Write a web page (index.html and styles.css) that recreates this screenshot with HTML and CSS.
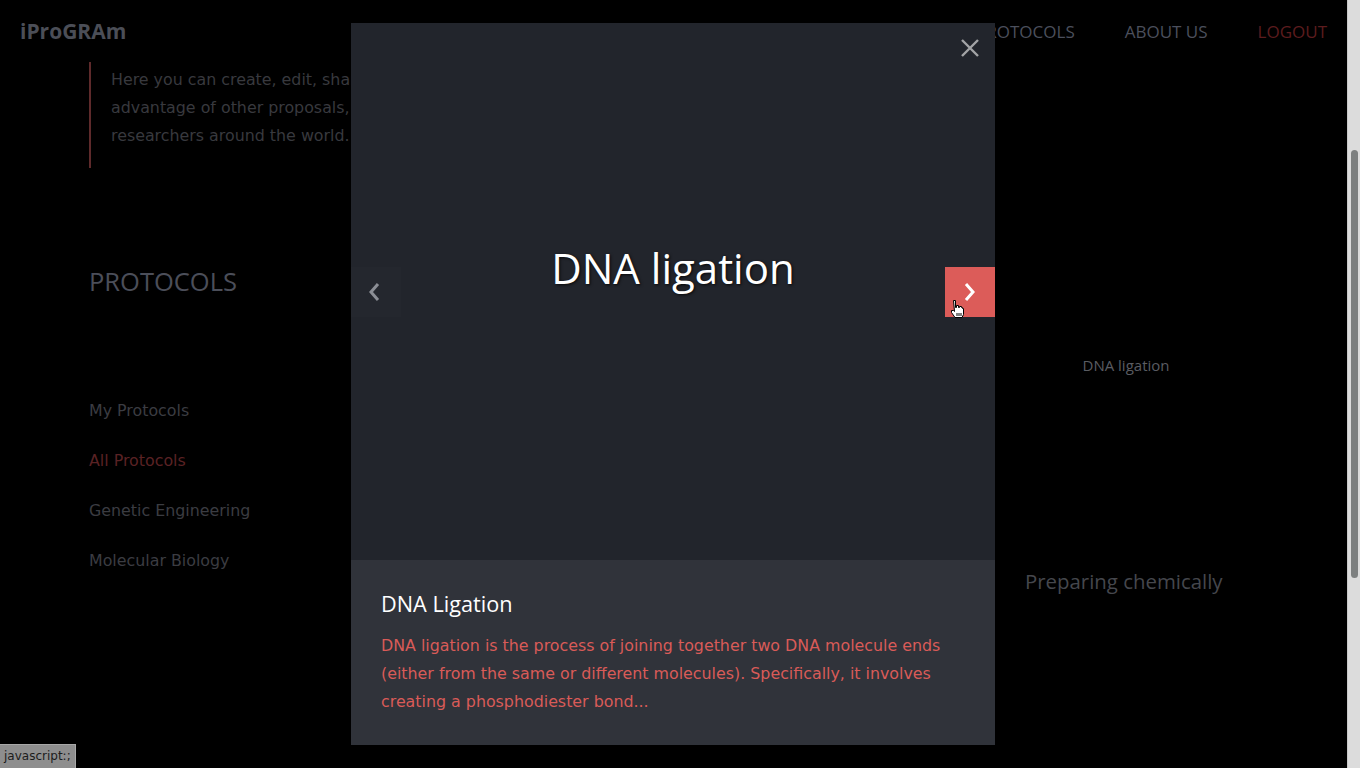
FILE: index.html
```html
<!DOCTYPE html>
<html lang="en">
<head>
<meta charset="utf-8">
<title>iProGRAm - Protocols</title>
<link rel="stylesheet" href="styles.css">
</head>
<body>
<div class="page">
  <div class="main">
    <header class="navbar">
      <div class="logo">iProGRAm</div>
      <nav class="nav">
        <a class="nav-link">HOME</a>
        <a class="nav-link">PROTOCOLS</a>
        <a class="nav-link">ABOUT US</a>
        <a class="nav-link logout">LOGOUT</a>
      </nav>
    </header>
    <div class="container">
      <blockquote class="intro">Here you can create, edit, share and take<br>advantage of other proposals, protocols by<br>researchers around the world.</blockquote>
      <section class="protocols">
        <aside class="sidebar">
          <h2 class="section-title">PROTOCOLS</h2>
          <ul class="menu">
            <li>My Protocols</li>
            <li class="active">All Protocols</li>
            <li>Genetic Engineering</li>
            <li>Molecular Biology</li>
          </ul>
        </aside>
        <div class="cards">
          <div class="card"></div>
          <div class="card"></div>
          <div class="card">
            <div class="card-thumb">DNA ligation</div>
            <div class="card-title">Preparing chemically</div>
          </div>
        </div>
      </section>
    </div>
  </div>
  <div class="scrollbar"><div class="thumb"></div></div>
</div>

<div class="modal">
  <div class="slide">
    <button class="close" aria-label="Close">
      <svg width="20" height="20" viewBox="0 0 20 20"><path d="M2 2 L18 18 M18 2 L2 18" stroke="#a3a4a6" stroke-width="2.4" fill="none"/></svg>
    </button>
    <h1 class="slide-title">DNA ligation</h1>
    <button class="arrow prev" aria-label="Previous">
      <svg width="14" height="20" viewBox="0 0 14 20"><path d="M10 2 L3 10 L10 18" stroke="#8b8e95" stroke-width="3" fill="none"/></svg>
    </button>
    <button class="arrow next" aria-label="Next">
      <svg width="14" height="20" viewBox="0 0 14 20"><path d="M4 2 L11 10 L4 18" stroke="#ffffff" stroke-width="3" fill="none"/></svg>
    </button>
  </div>
  <div class="caption">
    <h3 class="caption-title">DNA Ligation</h3>
    <p class="caption-text">DNA ligation is the process of joining together two DNA molecule ends (either from the same or different molecules). Specifically, it involves creating a phosphodiester bond...</p>
  </div>
</div>

<svg class="cursor" width="16" height="20" viewBox="0 0 16 20"><path d="M4.5 1.5 h2 v7 h1 v-2 h2 v2 h1 v-1 h2 v1 h1 v1 h1 v6 l-1.5 3 h-7 l-3.5 -5 v-2 h2 l1 1 z" fill="#ffffff" stroke="#000000" stroke-width="1"/><path d="M8 14 v3 M10 14 v3 M12 14 v3" stroke="#000" stroke-width="1"/></svg>

<div class="statusbar">javascript:;</div>
</body>
</html>
```

FILE: styles.css
```css
html, body {
  margin: 0;
  padding: 0;
  height: 100%;
  background: #000;
  overflow: hidden;
}

body {
  font-family: "DejaVu Sans", sans-serif;
}

.page {
  display: flex;
  height: 768px;
}

.main {
  flex: 1;
  min-width: 0;
}

.scrollbar {
  width: 13px;
  background: #dcdcdc;
  border-left: 1px solid #c8c8c8;
  box-sizing: border-box;
  padding-top: 150px;
  display: flex;
  justify-content: center;
}

.thumb {
  width: 7px;
  height: 428px;
  background: #7d8080;
  border-radius: 4px;
}

.navbar {
  height: 62px;
  display: flex;
  align-items: center;
  justify-content: space-between;
  padding: 0 20px;
}

.logo {
  font-family: "Open Sans", sans-serif;
  font-weight: 700;
  font-size: 21px;
  color: #4b4e57;
}

.nav {
  display: flex;
  gap: 50px;
}

.nav-link {
  font-family: "Open Sans", sans-serif;
  font-size: 17px;
  color: #4b4f5c;
}

.nav-link.logout {
  color: #5c1c1e;
}

.container {
  padding: 0 120px 0 89px;
}

.intro {
  margin: 0;
  border-left: 2px solid #5e2a2b;
  height: 106px;
  box-sizing: border-box;
  padding: 4px 0 0 20px;
  font-size: 15.85px;
  line-height: 28px;
  color: #38393e;
}

.protocols {
  display: flex;
  margin-top: 98px;
}

.sidebar {
  width: 260px;
}

.section-title {
  margin: 0;
  font-family: "Open Sans", sans-serif;
  font-weight: 400;
  font-size: 25.5px;
  line-height: 30px;
  color: #4b4e59;
}

.menu {
  list-style: none;
  margin: 90px 0 0;
  padding: 0;
}

.menu li {
  font-size: 15.85px;
  line-height: 50px;
  color: #3b3c42;
}

.menu li.active {
  color: #5a2224;
}

.cards {
  flex: 1;
  display: flex;
  justify-content: space-between;
}

.card {
  width: 202px;
}

.card-thumb {
  font-family: "Open Sans", sans-serif;
  font-size: 15px;
  line-height: 20px;
  text-align: center;
  color: #5a5c62;
  margin-top: 89px;
  height: 211px;
}

.card-title {
  font-family: "Open Sans", sans-serif;
  font-size: 20.4px;
  line-height: 30px;
  color: #45474d;
  white-space: nowrap;
}

/* modal */
.modal {
  position: fixed;
  left: 351px;
  top: 23px;
  width: 644px;
  height: 722px;
  display: flex;
  flex-direction: column;
}

.slide {
  position: relative;
  flex: 1;
  background: #22252c;
  padding-top: 220px;
  box-sizing: border-box;
}

.slide-title {
  margin: 0;
  text-align: center;
  font-family: "Open Sans", sans-serif;
  font-weight: 400;
  font-size: 42px;
  line-height: 50px;
  color: #ffffff;
  text-shadow: 1px 1px 3px rgba(0, 0, 0, 0.8);
}

.close {
  position: absolute;
  top: 15px;
  right: 15px;
  width: 20px;
  height: 20px;
  padding: 0;
  border: 0;
  background: none;
  display: flex;
}

.arrow {
  position: absolute;
  top: 244px;
  width: 50px;
  height: 50px;
  border: 0;
  padding: 0;
  display: flex;
  align-items: center;
  justify-content: center;
}

.arrow.prev {
  left: 0;
  background: #24272e;
  padding-right: 2px;
}

.arrow.next {
  right: 0;
  background: #dc5c59;
  padding-right: 2px;
}

.caption {
  height: 185px;
  background: #30333a;
  box-sizing: border-box;
  padding: 29px 30px 0;
}

.caption-title {
  margin: 0;
  font-family: "Open Sans", sans-serif;
  font-weight: 400;
  font-size: 21.7px;
  line-height: 30px;
  color: #ffffff;
}

.caption-text {
  margin: 13px 0 0;
  font-size: 15.85px;
  line-height: 28px;
  color: #d95b58;
}

.cursor {
  position: fixed;
  left: 949px;
  top: 299px;
}

.statusbar {
  position: fixed;
  left: 0;
  bottom: 0;
  height: 23px;
  padding: 0 4px;
  background: #8e8e8e;
  border: 1px solid #a8a8a8;
  border-left: 0;
  border-bottom: 0;
  font-size: 12px;
  line-height: 23px;
  color: #1c1c1c;
}
```
